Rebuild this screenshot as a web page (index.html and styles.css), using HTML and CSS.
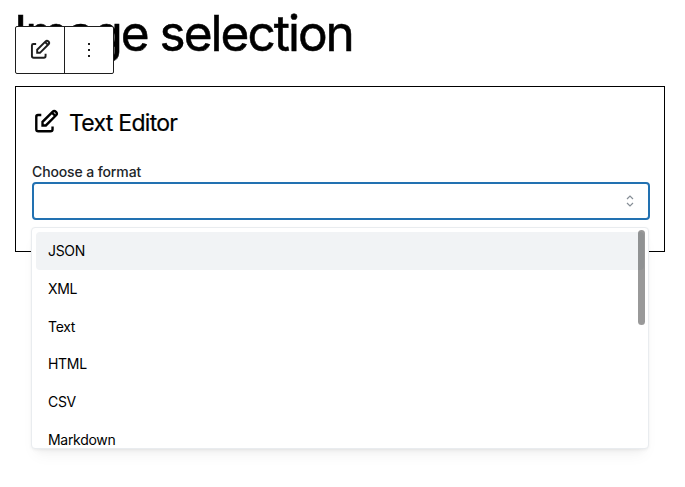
FILE: index.html
```html
<!DOCTYPE html>
<html lang="en">
<head>
<meta charset="utf-8">
<title>Image selection</title>
<link rel="stylesheet" href="styles.css">
</head>
<body>
<svg class="sprite" aria-hidden="true">
  <symbol id="edit" viewBox="0 0 24 24">
    <path d="M7 5.8H3.8Q2.2 5.8 2.2 7.4V19.4Q2.2 21.4 4.2 21.4H15.8Q17.8 21.4 17.8 19.4V16.8M8.2 15.8V12.3L17.8 2.7Q19.4 1.2 21.1 2.8Q22.7 4.4 21.2 6L11.4 15.8ZM17.2 3.4L20.5 6.7"/>
  </symbol>
</svg>
<main class="page">
  <h1 class="title">Image selection</h1>
  <div class="toolbar">
    <button class="tool" aria-label="Edit"><svg class="tool-icon"><use href="#edit"/></svg></button>
    <button class="tool" aria-label="More"><svg class="dots" viewBox="0 0 4 16"><path d="M1 1h2v2H1zM1 7h2v2H1zM1 13h2v2H1z"/></svg></button>
  </div>
  <section class="block">
    <header class="block-head"><svg class="block-icon"><use href="#edit"/></svg><h2 class="block-title">Text Editor</h2></header>
    <label class="label" for="format">Choose a format</label>
    <div class="select">
      <input class="input" id="format">
      <svg class="chevrons" viewBox="0 0 8 12"><path d="M1 4L4 1L7 4M1 8L4 11L7 8"/></svg>
      <div class="dropdown">
        <ul class="options">
          <li class="option active">JSON</li>
          <li class="option">XML</li>
          <li class="option">Text</li>
          <li class="option">HTML</li>
          <li class="option">CSV</li>
          <li class="option">Markdown</li>
        </ul>
        <span class="thumb"></span>
      </div>
    </div>
  </section>
</main>
</body>
</html>
```

FILE: styles.css
```css
* { box-sizing: border-box; }
body { margin: 0; background: #fff; color: #000; font-family: Inter, sans-serif; }
.sprite { position: absolute; width: 0; height: 0; }
.page { position: relative; height: 487px; padding: 0 20px 0 15px; }
.title { margin: 0 0 0 -1px; height: 86px; padding-top: 2px; font-size: 49.5px; line-height: 62px; font-weight: 400; letter-spacing: -2px; white-space: nowrap; -webkit-text-stroke: 0.5px #000; }
.toolbar { position: absolute; left: 15px; top: 26px; width: 99px; height: 48px; display: flex; border: 1px solid #1e1e1e; border-radius: 2px; background: #fff; }
.tool { flex: 1; display: flex; align-items: center; justify-content: center; padding: 0; border: 0; background: none; color: #1e1e1e; }
.tool + .tool { border-left: 1px solid #1e1e1e; }
.tool-icon { width: 21px; height: 21px; margin-top: -1px; fill: none; stroke: currentColor; stroke-width: 2.2; }
.dots { width: 4px; height: 16px; fill: currentColor; }
.block { height: 166px; border: 1px solid #000; padding: 20px 14px 0 16px; }
.block-head { display: flex; align-items: center; height: 32px; gap: 10px; padding-left: 2px; }
.block-icon { width: 25px; height: 25px; margin-top: -3px; fill: none; stroke: #000; stroke-width: 2.3; }
.block-title { margin: 0; font-size: 23px; line-height: 32px; font-weight: 400; letter-spacing: -0.72px; -webkit-text-stroke: 0.2px #000; }
.label { display: block; margin-top: 22px; height: 21px; font-size: 14px; line-height: 22px; font-weight: 500; letter-spacing: -0.12px; color: #212529; }
.select { position: relative; }
.input { display: block; width: 100%; height: 38px; border: 2px solid #2271b1; border-radius: 4px; background: #fff; outline: 0; }
.chevrons { position: absolute; right: 16px; top: 13px; width: 8px; height: 12px; fill: none; stroke: #868e96; stroke-width: 1.2; }
.dropdown { position: absolute; left: -1px; right: 1px; top: 45px; height: 222px; overflow: hidden; padding: 4px; border: 1px solid #e9ecef; border-radius: 4px; background: #fff; box-shadow: 0 1px 3px rgba(0,0,0,.05), 0 10px 15px -5px rgba(0,0,0,.05), 0 7px 7px -5px rgba(0,0,0,.04); }
.options { list-style: none; margin: 0; padding: 0; }
.option { height: 37.7px; padding: 0.4px 12px 0; font-size: 14px; line-height: 37.7px; letter-spacing: -0.3px; border-radius: 4px; }
.active { background: #f1f3f5; }
.thumb { position: absolute; top: 2px; right: 3px; width: 7px; height: 95px; border-radius: 4px; background: rgba(0,0,0,.4); }
```
